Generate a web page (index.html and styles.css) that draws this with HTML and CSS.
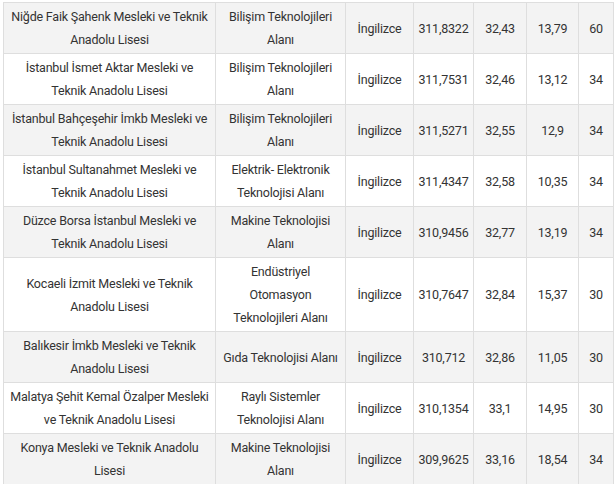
FILE: index.html
```html
<!DOCTYPE html>
<html lang="tr">
<head>
<meta charset="utf-8">
<title>Tablo</title>
<link rel="stylesheet" href="styles.css">
</head>
<body>
<div class="wrap">
<table class="data">
<colgroup>
<col class="c1"><col class="c2"><col class="c3"><col class="c4"><col class="c5"><col class="c6"><col class="c7">
</colgroup>
<tbody>
<tr><td>Niğde Faik Şahenk Mesleki ve Teknik Anadolu Lisesi</td><td>Bilişim Teknolojileri Alanı</td><td>İngilizce</td><td>311,8322</td><td>32,43</td><td>13,79</td><td>60</td></tr>
<tr><td>İstanbul İsmet Aktar Mesleki ve Teknik Anadolu Lisesi</td><td>Bilişim Teknolojileri Alanı</td><td>İngilizce</td><td>311,7531</td><td>32,46</td><td>13,12</td><td>34</td></tr>
<tr><td>İstanbul Bahçeşehir İmkb Mesleki ve Teknik Anadolu Lisesi</td><td>Bilişim Teknolojileri Alanı</td><td>İngilizce</td><td>311,5271</td><td>32,55</td><td>12,9</td><td>34</td></tr>
<tr><td>İstanbul Sultanahmet Mesleki ve Teknik Anadolu Lisesi</td><td>Elektrik- Elektronik Teknolojisi Alanı</td><td>İngilizce</td><td>311,4347</td><td>32,58</td><td>10,35</td><td>34</td></tr>
<tr><td>Düzce Borsa İstanbul Mesleki ve Teknik Anadolu Lisesi</td><td>Makine Teknolojisi Alanı</td><td>İngilizce</td><td>310,9456</td><td>32,77</td><td>13,19</td><td>34</td></tr>
<tr><td>Kocaeli İzmit Mesleki ve Teknik Anadolu Lisesi</td><td>Endüstriyel Otomasyon Teknolojileri Alanı</td><td>İngilizce</td><td>310,7647</td><td>32,84</td><td>15,37</td><td>30</td></tr>
<tr><td>Balıkesir İmkb Mesleki ve Teknik Anadolu Lisesi</td><td>Gıda Teknolojisi Alanı</td><td>İngilizce</td><td>310,712</td><td>32,86</td><td>11,05</td><td>30</td></tr>
<tr><td>Malatya Şehit Kemal Özalper Mesleki ve Teknik Anadolu Lisesi</td><td>Raylı Sistemler Teknolojisi Alanı</td><td>İngilizce</td><td>310,1354</td><td>33,1</td><td>14,95</td><td>30</td></tr>
<tr><td>Konya Mesleki ve Teknik Anadolu Lisesi</td><td>Makine Teknolojisi Alanı</td><td>İngilizce</td><td>309,9625</td><td>33,16</td><td>18,54</td><td>34</td></tr>
</tbody>
</table>
</div>
</body>
</html>
```

FILE: styles.css
```css
html, body {
  margin: 0;
  padding: 0;
  background: #ffffff;
}
.wrap {
  padding: 2px 0 0 3px;
}
.data {
  border-collapse: collapse;
  table-layout: fixed;
  width: 610px;
  font-family: Roboto, "Noto Sans", sans-serif;
  font-size: 12.5px;
  letter-spacing: -0.2px;
  line-height: 23px;
  color: #333333;
}
.c1 { width: 212px; }
.c2 { width: 130px; }
.c3 { width: 68px; }
.c4 { width: 60px; }
.c5 { width: 53px; }
.c6 { width: 52px; }
.c7 { width: 35px; }
.data td {
  border: 1px solid #dedede;
  padding: 2px 3px;
  text-align: center;
  vertical-align: middle;
}
.data tr:nth-child(odd) td {
  background: #f3f3f3;
}
.data tr:nth-child(even) td {
  background: #ffffff;
}
```
